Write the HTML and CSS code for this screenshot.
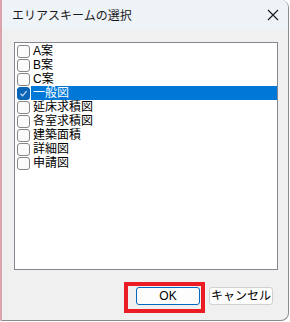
FILE: index.html
```html
<!DOCTYPE html>
<html lang="ja">
<head>
<meta charset="utf-8">
<link rel="stylesheet" href="styles.css">
</head>
<body>
<div class="window">
  <div class="titlebar">
    <span class="title">エリアスキームの選択</span>
    <svg class="close" width="12" height="12" viewBox="0 0 12 12"><path d="M1 1 L11 11 M11 1 L1 11" stroke="#1a1a1a" stroke-width="1.1" fill="none"/></svg>
  </div>
  <div class="content">
    <div class="listbox">
      <div class="row"><span class="cb"></span><span class="label">A案</span></div>
      <div class="row"><span class="cb"></span><span class="label">B案</span></div>
      <div class="row"><span class="cb"></span><span class="label">C案</span></div>
      <div class="row selected"><span class="cb checked"><svg width="11" height="11" viewBox="0 0 11 11"><path d="M2.5 5.8 L4.6 7.8 L8.6 3.2" stroke="#c8dcf0" stroke-width="1.2" fill="none"/></svg></span><span class="label">一般図</span></div>
      <div class="row"><span class="cb"></span><span class="label">延床求積図</span></div>
      <div class="row"><span class="cb"></span><span class="label">各室求積図</span></div>
      <div class="row"><span class="cb"></span><span class="label">建築面積</span></div>
      <div class="row"><span class="cb"></span><span class="label">詳細図</span></div>
      <div class="row"><span class="cb"></span><span class="label">申請図</span></div>
    </div>
    <div class="buttons">
      <div class="btn-wrap">
        <button class="btn default">OK</button>
        <span class="highlight"></span>
      </div>
      <button class="btn">キャンセル</button>
    </div>
  </div>
</div>
</body>
</html>
```
FILE: styles.css
```css
* { box-sizing: border-box; }
html, body { margin: 0; padding: 0; background: #ffffff; }
body {
  font-family: "Noto Sans CJK JP", "Noto Sans", sans-serif;
  font-size: 12px;
  color: #000;
}
.window {
  width: 289px;
  height: 321px;
  display: flex;
  flex-direction: column;
  border-left: 2px solid #dba3ac;
  border-right: 1px solid #8c8c8c;
  border-bottom: 1px solid #8c8c8c;
  border-radius: 0 8px 8px 0;
  background: #f0f0f0;
  overflow: hidden;
}
.titlebar {
  height: 30px;
  flex: none;
  background: #eef3f8;
  display: flex;
  align-items: center;
  justify-content: space-between;
  padding: 0 9px 1px 10px;
}
.title {
  font-size: 12px;
  color: #1a1a1a;
}
.close { display: block; }
.content {
  flex: 1;
  display: flex;
  flex-direction: column;
  padding: 12px 10px 0 12px;
}
.listbox {
  height: 228px;
  background: #fff;
  border: 1px solid #828790;
  padding: 1px 0 0 2px;
}
.row {
  height: 14px;
  display: flex;
  align-items: center;
}
.cb {
  width: 13px;
  height: 13px;
  border: 1px solid #868686;
  border-radius: 3px;
  background: #fbfbfb;
  flex: none;
  display: flex;
  align-items: center;
  justify-content: center;
}
.cb.checked {
  background: #0a64b8;
  border-color: #0a64b8;
}
.label {
  margin-left: 1px;
  padding-left: 2px;
  height: 14px;
  line-height: 14px;
  font-family: "Liberation Sans", "Noto Sans CJK JP", sans-serif;
  font-size: 12px;
  flex: 1;
}
.selected .label {
  background: #0078d7;
  color: #fff;
}
.buttons {
  display: flex;
  justify-content: flex-end;
  gap: 9px;
  padding: 17px 5px 0 0;
}
.btn-wrap {
  position: relative;
  display: flex;
}
.btn {
  width: 64px;
  height: 18px;
  padding: 0;
  font-family: "Liberation Sans", "Noto Sans CJK JP", sans-serif;
  font-size: 12px;
  line-height: 16px;
  background: #fdfdfd;
  border: 1px solid #d0d0d0;
  border-radius: 3px;
  color: #000;
}
.btn.default {
  border: 1px solid #0067c0;
}
.highlight {
  position: absolute;
  left: -12px;
  top: -5px;
  width: 81px;
  height: 31px;
  border: 4px solid #ec1c24;
}
```
